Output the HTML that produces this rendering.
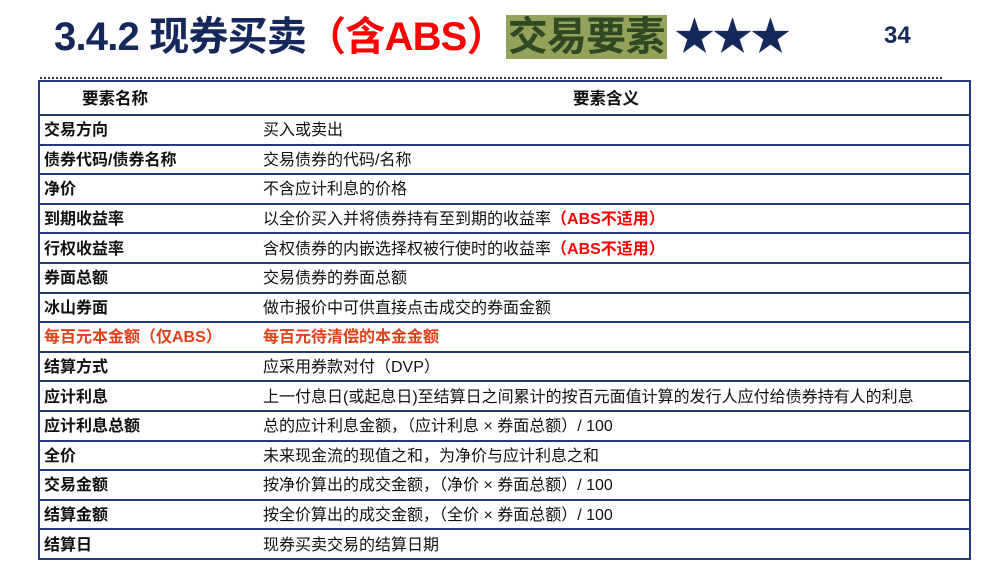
<!DOCTYPE html>
<html><head><meta charset="utf-8"><style>
body{margin:0;width:1000px;height:574px;background:#fff;position:relative;overflow:hidden;font-family:"Liberation Sans","Noto Sans CJK SC",sans-serif}
.t{position:absolute;top:13px;left:54px;font-size:40px;font-weight:bold;color:#14285a;white-space:nowrap;letter-spacing:-0.8px;line-height:48px}
.t .r{color:#f00}
.t .h{background:#93a35c;color:#2f4a22;padding:0 2px}
.t .s{color:#14285a;margin-left:8px;font-size:40px;letter-spacing:-2px}
.n{position:absolute;left:884px;top:22px;font-size:24px;font-weight:bold;color:#14285a}
.dot{position:absolute;left:40px;top:77px;width:902px;border-top:2px dotted #334}
table{position:absolute;left:38px;top:80px;width:933px;border-collapse:collapse;border:2px solid #1f3a78;table-layout:fixed}
td{border-top:2px solid #1f3a78;height:24.6px;padding:3px 0 0 4px;font-size:16px;color:#111;white-space:nowrap;line-height:20px;overflow:hidden;vertical-align:middle}
td.a{font-weight:bold}
tr.hd td{height:30px;padding-top:2px;font-weight:bold;font-size:16.5px;border-top:none}
tr.red td{color:#e0401a;font-weight:bold}
.rr{color:#f00;font-weight:bold}
</style></head><body>
<div class="t">3.4.2 现券买卖<span class="r">（含ABS）</span><span class="h">交易要素</span><span class="s">★★★</span></div>
<div class="n">34</div>
<div class="dot"></div>
<table>
<colgroup><col style="width:220px"><col></colgroup>
<tr class="hd"><td class="a" style="padding-left:42px">要素名称</td><td style="padding-left:314px">要素含义</td></tr>
<tr><td class="a">交易方向</td><td>买入或卖出</td></tr>
<tr><td class="a">债券代码/债券名称</td><td>交易债券的代码/名称</td></tr>
<tr><td class="a">净价</td><td>不含应计利息的价格</td></tr>
<tr><td class="a">到期收益率</td><td>以全价买入并将债券持有至到期的收益率<span class="rr">（ABS不适用）</span></td></tr>
<tr><td class="a">行权收益率</td><td>含权债券的内嵌选择权被行使时的收益率<span class="rr">（ABS不适用）</span></td></tr>
<tr><td class="a">券面总额</td><td>交易债券的券面总额</td></tr>
<tr><td class="a">冰山券面</td><td>做市报价中可供直接点击成交的券面金额</td></tr>
<tr class="red"><td class="a">每百元本金额（仅ABS）</td><td>每百元待清偿的本金金额</td></tr>
<tr><td class="a">结算方式</td><td>应采用券款对付（DVP）</td></tr>
<tr><td class="a">应计利息</td><td>上一付息日(或起息日)至结算日之间累计的按百元面值计算的发行人应付给债券持有人的利息</td></tr>
<tr><td class="a">应计利息总额</td><td>总的应计利息金额，（应计利息 × 券面总额）/ 100</td></tr>
<tr><td class="a">全价</td><td>未来现金流的现值之和，为净价与应计利息之和</td></tr>
<tr><td class="a">交易金额</td><td>按净价算出的成交金额，（净价 × 券面总额）/ 100</td></tr>
<tr><td class="a">结算金额</td><td>按全价算出的成交金额，（全价 × 券面总额）/ 100</td></tr>
<tr><td class="a">结算日</td><td>现券买卖交易的结算日期</td></tr>
</table>
</body></html>
